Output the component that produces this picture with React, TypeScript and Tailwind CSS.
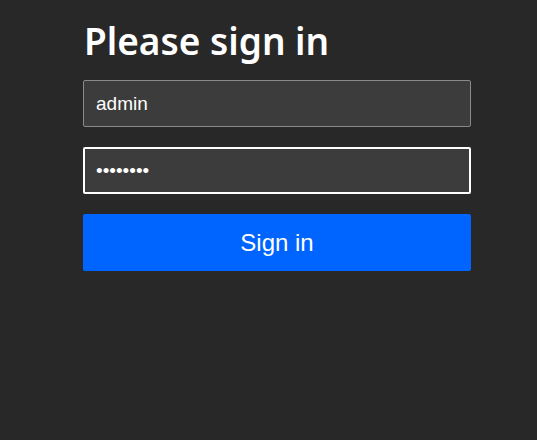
import React from 'react';

const App = () => {
  return (
    <div className="min-h-[440px] w-full bg-[#282828]">
      <div className="ml-[83px] w-[388px] pt-[18px]">
        <h1 className="mb-[16px] pl-px text-[37px] font-semibold leading-[46px] text-white [font-family:'Noto_Sans',sans-serif]">
          Please sign in
        </h1>
        <form className="flex flex-col" onSubmit={(e) => e.preventDefault()}>
          <input
            type="text"
            defaultValue="admin"
            className="h-[47px] w-full rounded-[2px] border border-[#8a8a8a] bg-[#3c3c3c] px-[12px] text-[19px] text-white outline-none [font-family:'Liberation_Sans',Arial,sans-serif]"
          />
          <input
            type="password"
            defaultValue="password"
            className="mt-[20px] h-[47px] w-full rounded-[2px] border-2 border-white bg-[#3c3c3c] px-[11px] text-[19px] text-white outline-none [font-family:'Liberation_Sans',Arial,sans-serif]"
          />
          <button
            type="submit"
            className="mt-[20px] h-[57px] w-full rounded-[2px] bg-[#0064fe] text-[24px] text-white [font-family:'Liberation_Sans',Arial,sans-serif]"
          >
            Sign in
          </button>
        </form>
      </div>
    </div>
  );
};

export default App;
